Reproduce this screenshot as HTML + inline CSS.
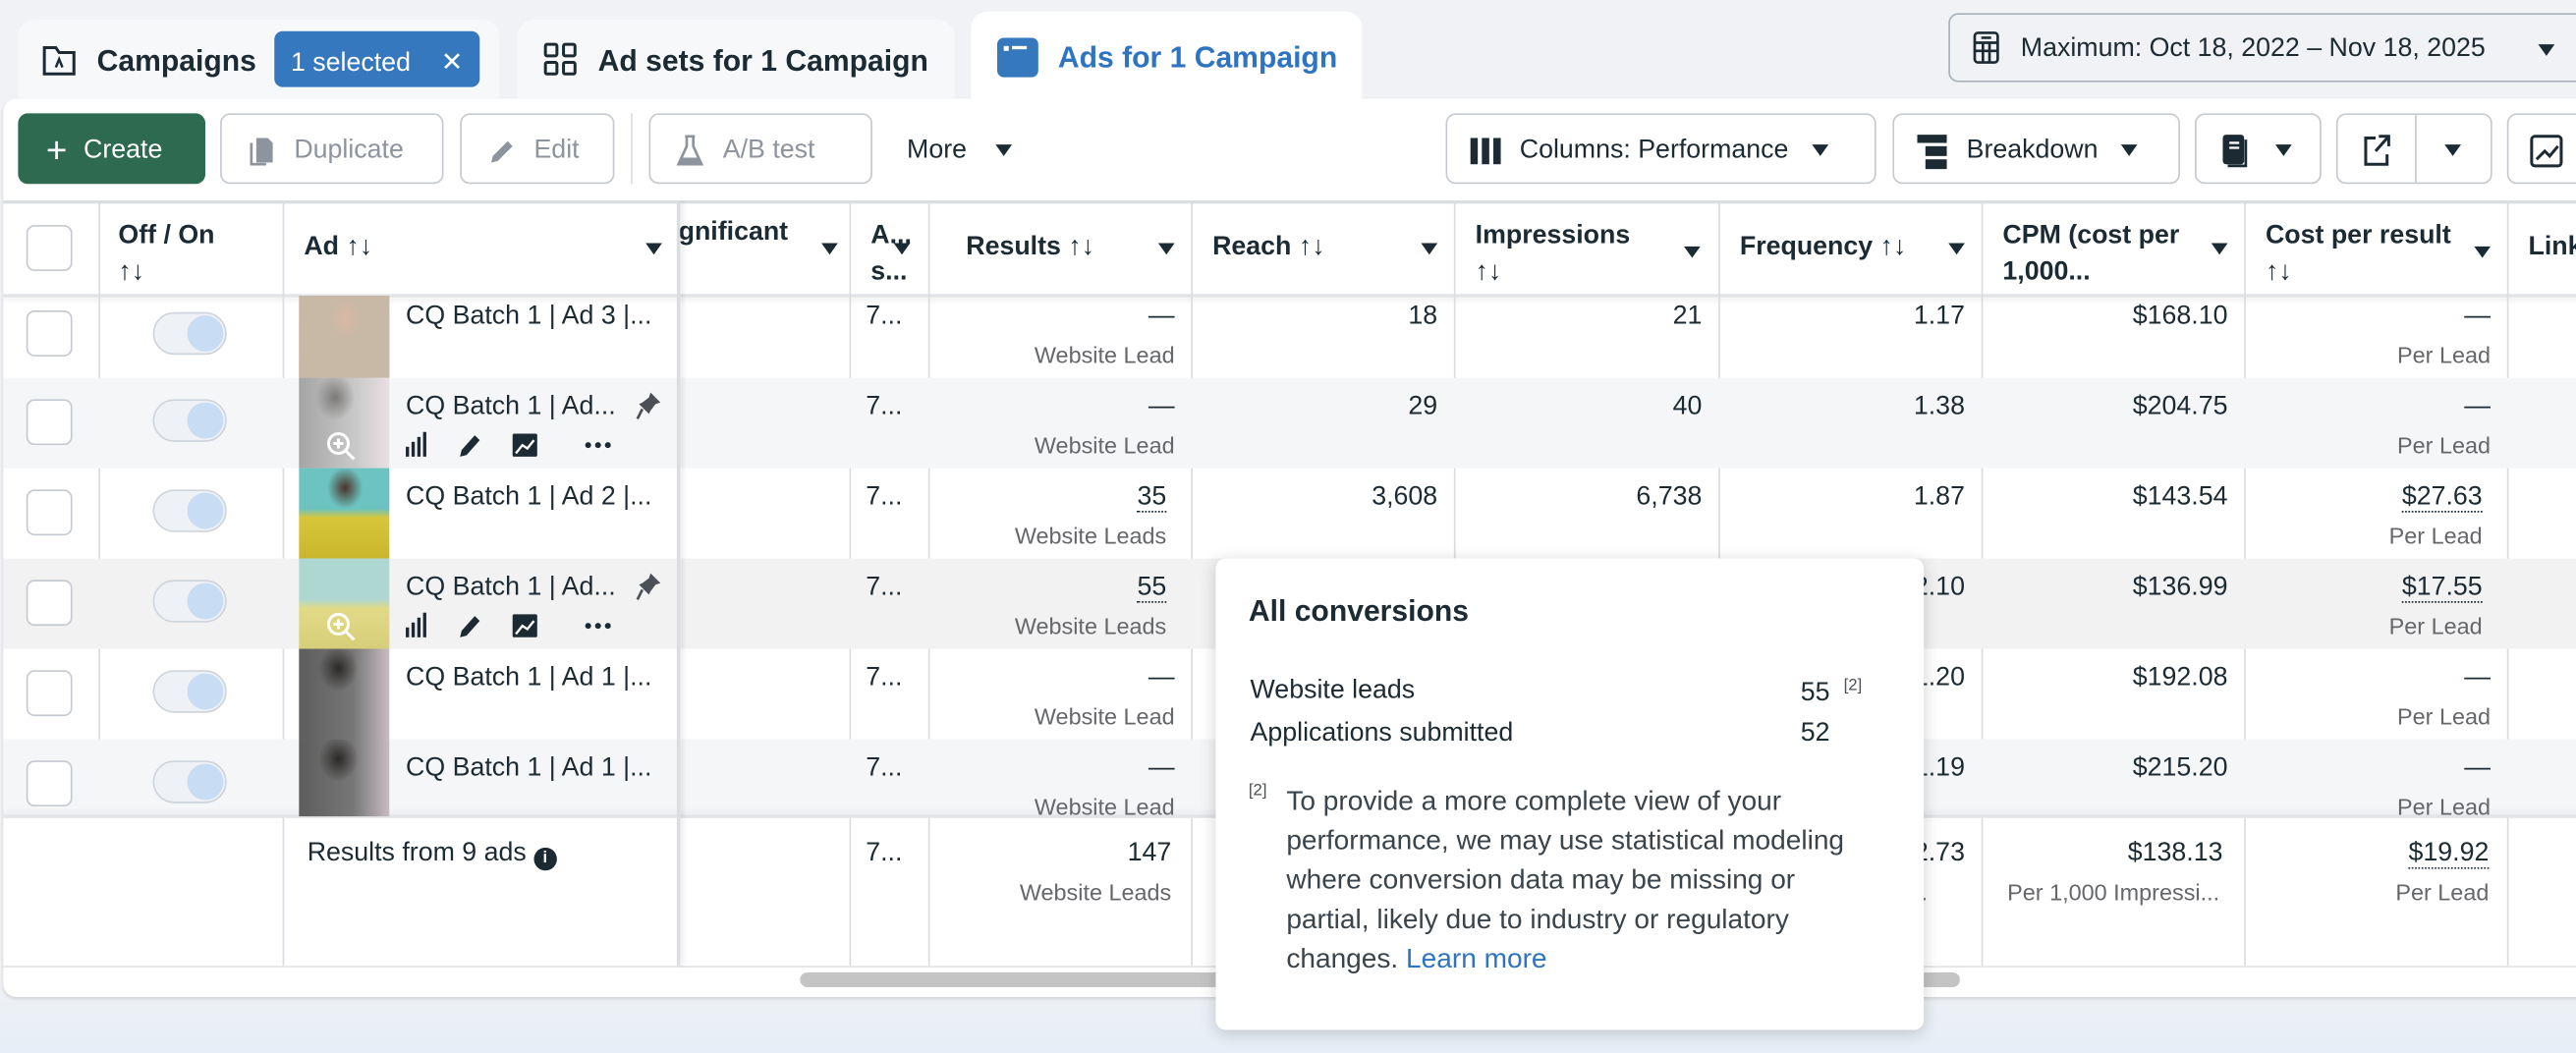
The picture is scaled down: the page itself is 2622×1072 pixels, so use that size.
<!DOCTYPE html>
<html><head><meta charset="utf-8"><style>
*{box-sizing:border-box;margin:0;padding:0}
html,body{width:2622px;height:1072px;overflow:hidden;background:#eef0f4}
#w{position:absolute;left:0;top:0;width:1568px;height:641px;transform:scale(1.672194);transform-origin:0 0;font-family:"Liberation Sans",sans-serif;color:#1c2b33;background:linear-gradient(#f0f2f5 0,#eff1f4 600px,#e5eef7 641px)}
.a{position:absolute}
.t{font-size:16px;white-space:nowrap}
.b{font-weight:bold}
.g{color:#65676b;font-size:14px}
.r{text-align:right}
.btn{position:absolute;top:69px;height:43px;border:1px solid #c5cad1;border-radius:6px;background:#fff;font-size:16px;display:flex;align-items:center;white-space:nowrap;padding-top:2px}
.dis{color:#8d949e}
.tri{display:inline-block;width:0;height:0;border-left:5px solid transparent;border-right:5px solid transparent;border-top:7px solid #1c2b33}
.cb{position:absolute;left:16px;width:28px;height:28px;border:1.5px solid #c5cad1;border-radius:5px;background:#fff}
.tg{position:absolute;left:93px;width:45px;height:26px;border-radius:13px;background:#eef1f5;border:1px solid #cfd5dc}
.tg:after{content:"";position:absolute;right:1px;top:1px;width:22px;height:22px;border-radius:11px;background:#c8dcf3}
.vl{position:absolute;top:123px;height:465px;width:1px;background:#dadde1}
.dot{border-bottom:1.5px dotted #1c2b33}
</style></head><body><div id="w">

<!-- tabs -->
<div class="a" style="left:11px;top:12px;width:293px;height:60px;background:#f7f8fa;border-radius:10px 10px 0 0"></div>
<svg class="a" style="left:25px;top:26px" width="22" height="22" viewBox="0 0 22 22"><path d="M2 3h7l2 3h9v13H2z" fill="none" stroke="#1c2b33" stroke-width="1.8"/><path d="M9 15l2-5 2 5" fill="none" stroke="#1c2b33" stroke-width="1.5"/></svg>
<div class="a t b" style="left:59px;top:27px;font-size:18px">Campaigns</div>
<div class="a" style="left:167px;top:19px;width:125px;height:34px;background:#3578be;border-radius:5px;color:#fff;font-size:16px;padding:9px 0 0 10px">1 selected <span style="margin-left:14px">✕</span></div>
<div class="a" style="left:315px;top:12px;width:266px;height:60px;background:#f7f8fa;border-radius:10px 10px 0 0"></div>
<svg class="a" style="left:330px;top:25px" width="22" height="22" viewBox="0 0 22 22" fill="none" stroke="#1c2b33" stroke-width="1.8"><rect x="2" y="2" width="7" height="7" rx="1"/><rect x="13" y="2" width="7" height="7" rx="1"/><rect x="2" y="13" width="7" height="7" rx="1"/><rect x="13" y="13" width="7" height="7" rx="1"/></svg>
<div class="a t b" style="left:364px;top:27px;font-size:18px">Ad sets for 1 Campaign</div>
<div class="a" style="left:591px;top:7px;width:238px;height:65px;background:#fff;border-radius:10px 10px 0 0"></div>
<div class="a" style="left:607px;top:23px;width:25px;height:24px;background:#3578be;border-radius:4px"><div class="a" style="left:4px;top:5px;width:3px;height:3px;background:#fff"></div><div class="a" style="left:9px;top:5px;width:9px;height:2px;background:#fff"></div></div>
<div class="a t b" style="left:644px;top:25px;font-size:18px;color:#2f74c0">Ads for 1 Campaign</div>
<div class="a" style="left:1186px;top:8px;width:390px;height:42px;border:1.5px solid #a8b0ba;border-radius:6px;background:#f0f2f5"></div>
<svg class="a" style="left:1200px;top:19px" width="18" height="20" viewBox="0 0 18 20" fill="none" stroke="#1c2b33" stroke-width="1.6"><rect x="2" y="1" width="14" height="18" rx="2"/><path d="M2 7h14M2 12h14M7 7v12M11 7v12M6 4h6"/></svg>
<div class="a t" style="left:1230px;top:21px">Maximum: Oct 18, 2022 – Nov 18, 2025</div>
<div class="a tri" style="left:1545px;top:27px"></div>

<!-- white panel -->
<div class="a" style="left:2px;top:60px;width:1580px;height:547px;background:#fff;border-radius:8px 0 0 8px;box-shadow:0 1px 2px rgba(0,0,0,.12)"></div>

<!-- toolbar -->
<div class="btn" style="left:11px;width:114px;background:#2d6a4f;border-color:#2d6a4f;color:#fff;padding-left:16px"><span style="font-size:22px;margin-right:10px;font-weight:300">+</span>Create</div>
<div class="btn dis" style="left:134px;width:136px;padding-left:14px"><svg width="20" height="20" viewBox="0 0 20 20"><path d="M7 2h7l3 3v12H7z" fill="#8d949e"/><path d="M4 5v13h9" fill="none" stroke="#8d949e" stroke-width="1.6"/></svg><span style="margin-left:10px">Duplicate</span></div>
<div class="btn dis" style="left:280px;width:94px;padding-left:14px"><svg width="20" height="20" viewBox="0 0 20 20"><path d="M4 17l1-4 9-9 3 3-9 9z" fill="#8d949e"/></svg><span style="margin-left:10px">Edit</span></div>
<div class="a" style="left:384px;top:69px;width:1px;height:43px;background:#dadde1"></div>
<div class="btn dis" style="left:395px;width:136px;padding-left:14px"><svg width="20" height="22" viewBox="0 0 20 22"><path d="M7 2h6M8 2v6l-5 11h14l-5-11V2" fill="none" stroke="#8d949e" stroke-width="1.6"/><path d="M4.5 15h11l1.5 4H3z" fill="#8d949e"/></svg><span style="margin-left:10px">A/B test</span></div>
<div class="a t" style="left:552px;top:83px">More</div><div class="a tri" style="left:606px;top:88px"></div>
<div class="btn" style="left:880px;width:262px;padding-left:14px"><svg width="20" height="18"><rect x="0" y="1" width="4.5" height="16" fill="#1c2b33"/><rect x="7" y="1" width="4.5" height="16" fill="#1c2b33"/><rect x="14" y="1" width="4.5" height="16" fill="#1c2b33"/></svg><span style="margin-left:10px">Columns: Performance</span><span class="tri" style="margin-left:14px"></span></div>
<div class="btn" style="left:1152px;width:175px;padding-left:14px"><svg width="20" height="22"><rect x="0" y="1" width="18" height="5" fill="#1c2b33"/><rect x="5" y="8" width="13" height="6" fill="#1c2b33"/><rect x="5" y="16" width="13" height="6" fill="#1c2b33"/></svg><span style="margin-left:10px">Breakdown</span><span class="tri" style="margin-left:14px"></span></div>
<div class="btn" style="left:1336px;width:77px;padding-left:14px"><svg width="20" height="22" viewBox="0 0 20 22"><rect x="2" y="1" width="13" height="18" rx="2" fill="#1c2b33"/><path d="M6 6h6M6 9h6" stroke="#fff" stroke-width="1.4"/><path d="M16 4v16H5" fill="none" stroke="#1c2b33" stroke-width="1.6"/></svg><span class="tri" style="margin-left:14px"></span></div>
<div class="btn" style="left:1422px;width:95px"><svg style="margin-left:14px" width="20" height="22" viewBox="0 0 20 22" fill="none" stroke="#1c2b33" stroke-width="1.8"><path d="M9 3H3v16h13v-6M11 2h6v6M17 2l-8 9"/></svg><div style="position:absolute;left:47px;top:0;width:1px;height:41px;background:#c5cad1"></div><span class="tri" style="position:absolute;left:65px;top:18px"></span></div>
<div class="btn" style="left:1526px;width:60px"><svg style="margin-left:12px" width="22" height="22" viewBox="0 0 22 22" fill="none" stroke="#1c2b33" stroke-width="1.8"><rect x="2" y="2" width="18" height="18" rx="2"/><path d="M5 16l5-5 3 3 5-6"/></svg></div>

<!-- table header -->
<div class="a" style="left:2px;top:122px;width:1580px;height:2px;background:#dadde1"></div>
<div class="a" style="left:2px;top:179px;width:1580px;height:2px;background:#e2e4e8;box-shadow:0 2px 3px rgba(0,0,0,.08)"></div>
<div class="a" style="left:16px;top:137px;width:28px;height:28px;border:1.5px solid #c5cad1;border-radius:5px"></div>
<div class="vl" style="left:60px;height:374px"></div><div class="vl" style="left:172px"></div>
<div class="vl" style="left:517px"></div><div class="vl" style="left:565px"></div><div class="vl" style="left:725px"></div><div class="vl" style="left:885px"></div><div class="vl" style="left:1046px"></div><div class="vl" style="left:1206px"></div><div class="vl" style="left:1366px"></div><div class="vl" style="left:1526px"></div>
<div class="a t b" style="left:72px;top:133px;line-height:22px">Off / On<br>↑↓</div>
<div class="a t b" style="left:185px;top:142px">Ad ↑↓</div><div class="a tri" style="left:393px;top:148px"></div>
<div class="a t b" style="left:413px;top:133px">gnificant</div><div class="a tri" style="left:500px;top:148px"></div>
<div class="a t b" style="left:530px;top:133px;line-height:22px">A...<br>s...</div><div class="a tri" style="left:544px;top:148px"></div>
<div class="a t b" style="left:588px;top:142px">Results ↑↓</div><div class="a tri" style="left:705px;top:148px"></div>
<div class="a t b" style="left:738px;top:142px">Reach ↑↓</div><div class="a tri" style="left:865px;top:148px"></div>
<div class="a t b" style="left:898px;top:133px;line-height:22px">Impressions<br>↑↓</div><div class="a tri" style="left:1025px;top:150px"></div>
<div class="a t b" style="left:1059px;top:142px">Frequency ↑↓</div><div class="a tri" style="left:1186px;top:148px"></div>
<div class="a t b" style="left:1219px;top:133px;line-height:22px">CPM (cost per<br>1,000...</div><div class="a tri" style="left:1346px;top:148px"></div>
<div class="a t b" style="left:1379px;top:133px;line-height:22px">Cost per result<br>↑↓</div><div class="a tri" style="left:1506px;top:150px"></div>
<div class="a t b" style="left:1539px;top:142px">Link</div>

<!-- rows -->
<div class="a" style="left:2px;top:230px;width:1580px;height:55px;background:#f5f6f8"></div>
<div class="a" style="left:2px;top:340px;width:1580px;height:55px;background:#f2f2f3"></div>
<div class="a" style="left:2px;top:450px;width:1580px;height:47px;background:#f5f6f8"></div>
<div class="a" style="left:2px;top:496px;width:1580px;height:2px;background:#e2e4e8;box-shadow:0 -2px 3px rgba(0,0,0,.06)"></div>
<div class="a" style="left:2px;top:588px;width:1580px;height:1px;background:#e2e4e8"></div>

<!-- Ad column shadow -->
<div class="a" style="left:412px;top:123px;width:2px;height:465px;background:#dadde1;box-shadow:2px 0 3px rgba(0,0,0,.1)"></div>

<!-- checkboxes & toggles -->
<div class="cb" style="top:189px"></div><div class="tg" style="top:190px"></div>
<div class="cb" style="top:243px"></div><div class="tg" style="top:243px"></div>
<div class="cb" style="top:298px"></div><div class="tg" style="top:298px"></div>
<div class="cb" style="top:353px"></div><div class="tg" style="top:353px"></div>
<div class="cb" style="top:408px"></div><div class="tg" style="top:408px"></div>
<div class="cb" style="top:463px"></div><div class="tg" style="top:463px"></div>

<!-- thumbs -->
<div class="a" style="left:182px;top:180px;width:55px;height:50px;background:radial-gradient(ellipse 14px 18px at 28px 14px,#d9b9a5,#c8b8a6 70%),linear-gradient(#d8d4cc,#a9a28f)"></div>
<div class="a" style="left:182px;top:230px;width:55px;height:55px;background:radial-gradient(ellipse 12px 14px at 22px 12px,#55514d,transparent),linear-gradient(90deg,#8a8a8a,#b8b8b8 60%,#e6d8dc);opacity:.75"></div>
<div class="a" style="left:182px;top:285px;width:55px;height:55px;background:radial-gradient(ellipse 12px 14px at 28px 12px,#4a3326,transparent 90%),linear-gradient(#6cc3c0 0,#6cc3c0 45%,#d8c63a 55%,#c9b62c)"></div>
<div class="a" style="left:182px;top:340px;width:55px;height:55px;background:linear-gradient(#a6d4cf 0,#a6d4cf 45%,#dfd77a 55%,#d5ca6c);opacity:.9"></div>
<div class="a" style="left:182px;top:395px;width:55px;height:55px;background:radial-gradient(ellipse 12px 14px at 24px 12px,#2b2927,transparent),linear-gradient(90deg,#5d5d5d,#777 60%,#c9bcc3)"></div>
<div class="a" style="left:182px;top:450px;width:55px;height:47px;background:radial-gradient(ellipse 12px 14px at 24px 12px,#2b2927,transparent),linear-gradient(90deg,#5d5d5d,#777 60%,#c9bcc3)"></div>
<svg class="a" style="left:198px;top:262px" width="20" height="20" viewBox="0 0 20 20" fill="none" stroke="#fff" stroke-width="1.8"><circle cx="8" cy="8" r="6"/><path d="M12.5 12.5l5 5M8 5v6M5 8h6"/></svg>
<svg class="a" style="left:198px;top:372px" width="20" height="20" viewBox="0 0 20 20" fill="none" stroke="#fff" stroke-width="1.8"><circle cx="8" cy="8" r="6"/><path d="M12.5 12.5l5 5M8 5v6M5 8h6"/></svg>

<div class="a t" style="left:247px;top:184px">CQ Batch 1 | Ad 3 |...</div>
<div class="a t" style="left:247px;top:239px">CQ Batch 1 | Ad...</div>
<div class="a t" style="left:247px;top:294px">CQ Batch 1 | Ad 2 |...</div>
<div class="a t" style="left:247px;top:349px">CQ Batch 1 | Ad...</div>
<div class="a t" style="left:247px;top:404px">CQ Batch 1 | Ad 1 |...</div>
<div class="a t" style="left:247px;top:459px">CQ Batch 1 | Ad 1 |...</div>
<!-- hover icons -->
<svg class="a" style="left:387px;top:238px" width="16" height="18" viewBox="0 0 16 18"><path d="M9 1l6 6-3 1-3 4-1 2-6-6 2-1 4-3z" fill="#4b4f56"/><path d="M4 11l-3 6" stroke="#4b4f56" stroke-width="1.6"/></svg>
<svg class="a" style="left:387px;top:348px" width="16" height="18" viewBox="0 0 16 18"><path d="M9 1l6 6-3 1-3 4-1 2-6-6 2-1 4-3z" fill="#4b4f56"/><path d="M4 11l-3 6" stroke="#4b4f56" stroke-width="1.6"/></svg>
<svg class="a" style="left:246px;top:262px" width="135" height="18" viewBox="0 0 135 18"><g fill="#1c2b33"><rect x="1" y="10" width="2" height="6"/><rect x="4.5" y="7" width="2" height="9"/><rect x="8" y="4" width="2" height="12"/><rect x="11.5" y="1" width="2" height="15"/><path d="M34 16l1-4 8-9 3 3-8 9z"/><rect x="66" y="2" width="15" height="14" rx="1"/><circle cx="112" cy="9" r="1.8"/><circle cx="118" cy="9" r="1.8"/><circle cx="124" cy="9" r="1.8"/></g><path d="M68 14l4-5 3 2 4-5" stroke="#fff" stroke-width="1.4" fill="none"/></svg>
<svg class="a" style="left:246px;top:372px" width="135" height="18" viewBox="0 0 135 18"><g fill="#1c2b33"><rect x="1" y="10" width="2" height="6"/><rect x="4.5" y="7" width="2" height="9"/><rect x="8" y="4" width="2" height="12"/><rect x="11.5" y="1" width="2" height="15"/><path d="M34 16l1-4 8-9 3 3-8 9z"/><rect x="66" y="2" width="15" height="14" rx="1"/><circle cx="112" cy="9" r="1.8"/><circle cx="118" cy="9" r="1.8"/><circle cx="124" cy="9" r="1.8"/></g><path d="M68 14l4-5 3 2 4-5" stroke="#fff" stroke-width="1.4" fill="none"/></svg>

<!-- A.. col -->
<div class="a t" style="left:527px;top:184px">7...</div><div class="a t" style="left:527px;top:239px">7...</div><div class="a t" style="left:527px;top:294px">7...</div><div class="a t" style="left:527px;top:349px">7...</div><div class="a t" style="left:527px;top:404px">7...</div><div class="a t" style="left:527px;top:459px">7...</div><div class="a t" style="left:527px;top:511px">7...</div>

<!-- Results col -->
<div class="a r" style="left:565px;width:150px;top:184px"><div class="t">—</div><div class="g" style="margin-top:6px">Website Lead</div></div>
<div class="a r" style="left:565px;width:150px;top:239px"><div class="t">—</div><div class="g" style="margin-top:6px">Website Lead</div></div>
<div class="a r" style="left:565px;width:145px;top:294px"><div class="t"><span class="dot">35</span></div><div class="g" style="margin-top:6px">Website Leads</div></div>
<div class="a r" style="left:565px;width:145px;top:349px"><div class="t"><span class="dot">55</span></div><div class="g" style="margin-top:6px">Website Leads</div></div>
<div class="a r" style="left:565px;width:150px;top:404px"><div class="t">—</div><div class="g" style="margin-top:6px">Website Lead</div></div>
<div class="a r" style="left:565px;width:150px;top:459px"><div class="t">—</div><div class="g" style="margin-top:6px">Website Lead</div></div>
<div class="a r" style="left:565px;width:148px;top:511px"><div class="t">147</div><div class="g" style="margin-top:6px">Website Leads</div></div>

<!-- Reach / Impr / Freq -->
<div class="a t r" style="left:725px;width:150px;top:184px">18</div><div class="a t r" style="left:885px;width:151px;top:184px">21</div><div class="a t r" style="left:1046px;width:150px;top:184px">1.17</div>
<div class="a t r" style="left:725px;width:150px;top:239px">29</div><div class="a t r" style="left:885px;width:151px;top:239px">40</div><div class="a t r" style="left:1046px;width:150px;top:239px">1.38</div>
<div class="a t r" style="left:725px;width:150px;top:294px">3,608</div><div class="a t r" style="left:885px;width:151px;top:294px">6,738</div><div class="a t r" style="left:1046px;width:150px;top:294px">1.87</div>
<div class="a t r" style="left:1046px;width:150px;top:349px">2.10</div>
<div class="a t r" style="left:1046px;width:150px;top:404px">1.20</div>
<div class="a t r" style="left:1046px;width:150px;top:459px">1.19</div>
<div class="a t r" style="left:1046px;width:150px;top:511px">2.73</div>
<div class="a g" style="left:1150px;top:535px">nt...</div>

<!-- CPM -->
<div class="a t r" style="left:1206px;width:150px;top:184px">$168.10</div>
<div class="a t r" style="left:1206px;width:150px;top:239px">$204.75</div>
<div class="a t r" style="left:1206px;width:150px;top:294px">$143.54</div>
<div class="a t r" style="left:1206px;width:150px;top:349px">$136.99</div>
<div class="a t r" style="left:1206px;width:150px;top:404px">$192.08</div>
<div class="a t r" style="left:1206px;width:150px;top:459px">$215.20</div>
<div class="a r" style="left:1206px;width:145px;top:511px"><div class="t" style="margin-right:-2px">$138.13</div><div class="g" style="margin-top:6px">Per 1,000 Impressi...</div></div>

<!-- CPR -->
<div class="a r" style="left:1366px;width:150px;top:184px"><div class="t">—</div><div class="g" style="margin-top:6px">Per Lead</div></div>
<div class="a r" style="left:1366px;width:150px;top:239px"><div class="t">—</div><div class="g" style="margin-top:6px">Per Lead</div></div>
<div class="a r" style="left:1366px;width:145px;top:294px"><div class="t"><span class="dot">$27.63</span></div><div class="g" style="margin-top:6px">Per Lead</div></div>
<div class="a r" style="left:1366px;width:145px;top:349px"><div class="t"><span class="dot">$17.55</span></div><div class="g" style="margin-top:6px">Per Lead</div></div>
<div class="a r" style="left:1366px;width:150px;top:404px"><div class="t">—</div><div class="g" style="margin-top:6px">Per Lead</div></div>
<div class="a r" style="left:1366px;width:150px;top:459px"><div class="t">—</div><div class="g" style="margin-top:6px">Per Lead</div></div>
<div class="a r" style="left:1366px;width:149px;top:511px"><div class="t"><span class="dot">$19.92</span></div><div class="g" style="margin-top:6px">Per Lead</div></div>

<!-- footer label -->
<div class="a t" style="left:187px;top:511px">Results from 9 ads <span style="display:inline-block;width:14px;height:14px;border-radius:7px;background:#1c2b33;color:#fff;font-size:10px;font-weight:bold;text-align:center;line-height:14px;vertical-align:-1px">i</span></div>

<!-- scrollbar -->
<div class="a" style="left:487px;top:592px;width:706px;height:9px;border-radius:5px;background:#c4c4c4"></div>

<!-- tooltip -->
<div class="a" style="left:740px;top:340px;width:431px;height:287px;background:#fff;border-radius:6px;box-shadow:0 2px 10px rgba(0,0,0,.18)">
<div class="a t b" style="left:20px;top:22px;font-size:18px">All conversions</div>
<div class="a t" style="left:21px;top:72px">Website leads</div><div class="a t" style="left:356px;top:72px">55 <sup style="font-size:10px;color:#4b4f56;margin-left:4px">[2]</sup></div>
<div class="a t" style="left:21px;top:98px">Applications submitted</div><div class="a t" style="left:356px;top:98px">52</div>
<div class="a" style="left:20px;top:136px;font-size:10px;color:#4b4f56">[2]</div>
<div class="a" style="left:43px;top:136px;width:385px;font-size:16.8px;line-height:24px;color:#3a444c;white-space:nowrap">To provide a more complete view of your<br>performance, we may use statistical modeling<br>where conversion data may be missing or<br>partial, likely due to industry or regulatory<br>changes. <span style="color:#2f74c0">Learn more</span></div>
</div>

</div></body></html>
